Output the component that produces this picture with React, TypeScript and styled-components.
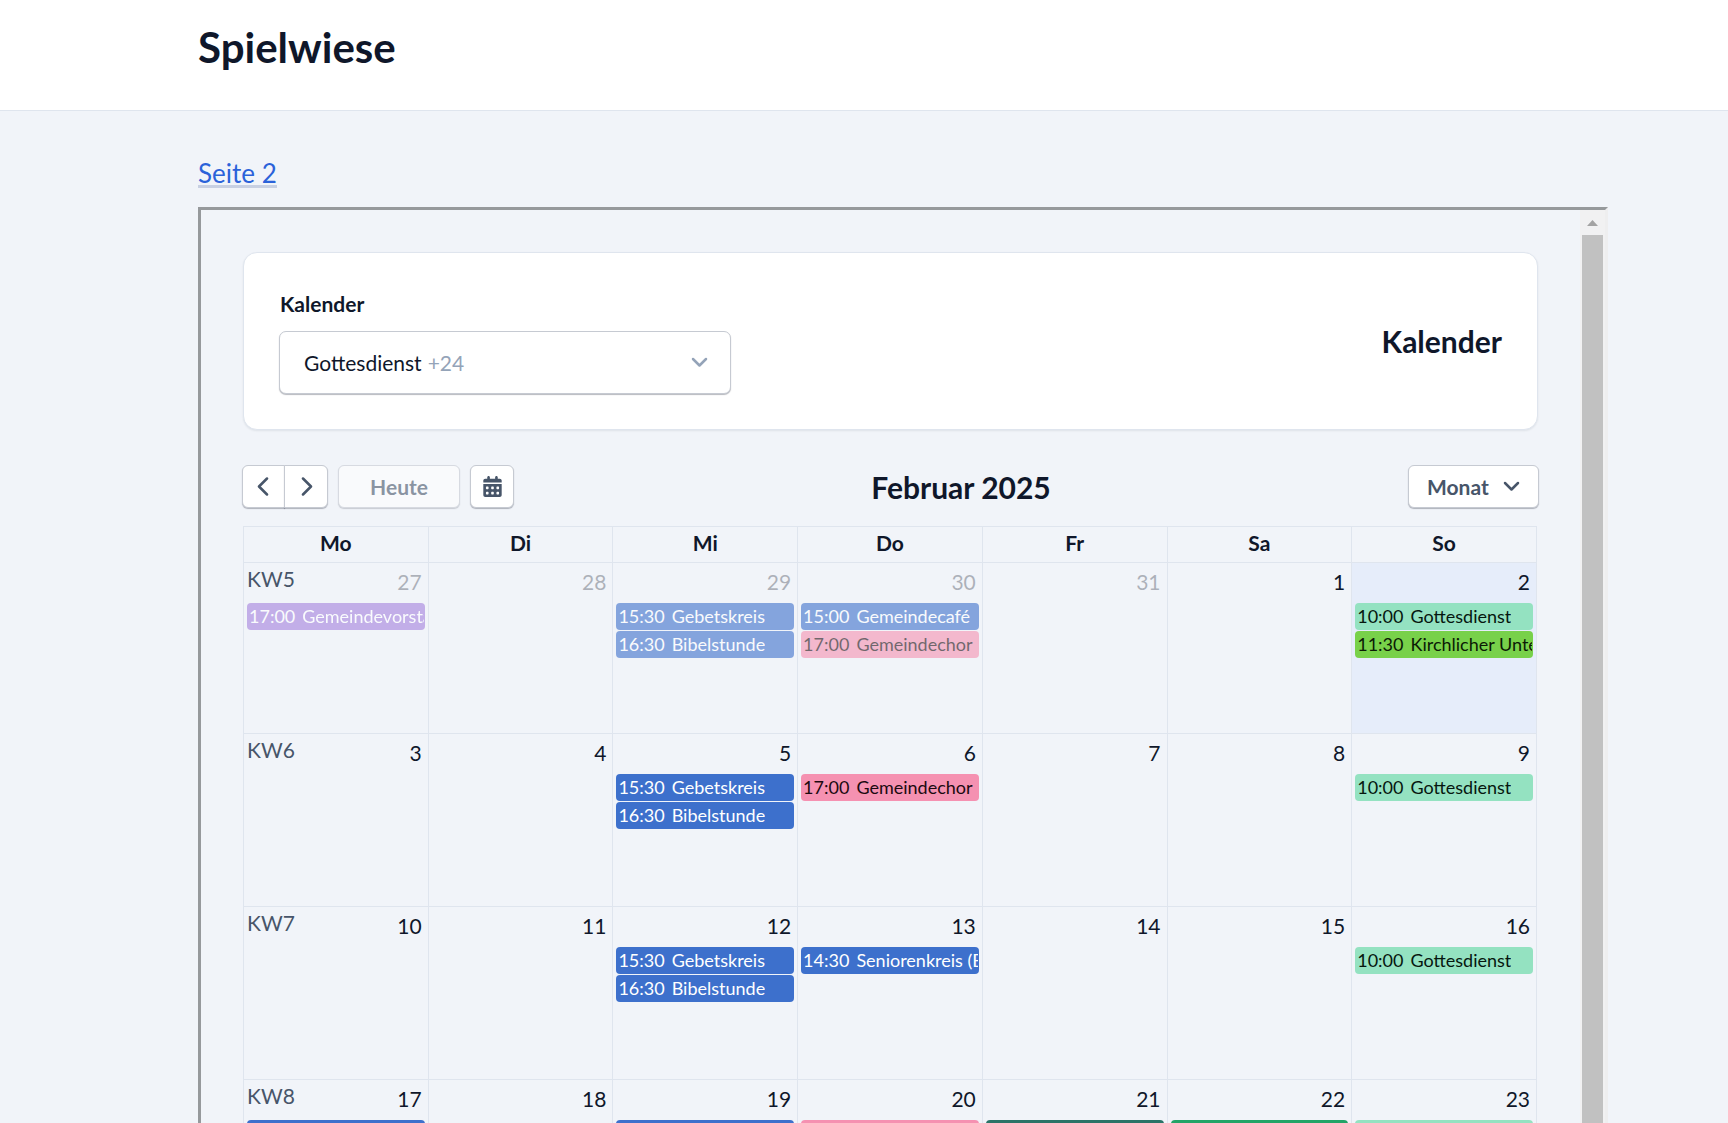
import React from "react";
import styled, { createGlobalStyle } from "styled-components";
import { FaCalendarDays } from "react-icons/fa6";

const color = {
  page: "#f1f4f9",
  text: "#0f172a",
  muted: "#475569",
  faint: "#94a3b8",
  line: "#dfe5ee",
  control: "#c6cad2",
};

const GlobalStyle = createGlobalStyle`
  *, *::before, *::after { box-sizing: border-box; }
  body {
    margin: 0;
    background: ${color.page};
    color: ${color.text};
    font-family: Lato, "Liberation Sans", sans-serif;
    font-size: 21px;
    line-height: 32px;
  }
  button, select { font: inherit; color: inherit; }
`;

const Page = styled.div`
  display: flex;
  flex-direction: column;
  height: 100vh;
  overflow: hidden;
`;

const Header = styled.header`
  flex: none;
  padding: 19px 120px 35px 198px;
  background: #fff;
  border-bottom: 1px solid ${color.line};
`;

const PageTitle = styled.h1`
  margin: 0;
  font-size: 42px;
  line-height: 56px;
  font-weight: 700;
`;

const Main = styled.main`
  display: flex;
  flex: 1;
  flex-direction: column;
  align-items: flex-start;
  min-height: 0;
  padding: 50px 120px 0 198px;
`;

const PageLink = styled.a`
  margin-bottom: 19px;
  border-bottom: 3px solid #c8d0e2;
  color: #2b62d9;
  font-size: 26px;
  line-height: 24px;
  text-decoration: none;
`;

const Frame = styled.section`
  display: flex;
  flex: 1;
  width: 100%;
  min-height: 0;
  border: 3px solid #96999c;
  border-right-color: #eeeeef;
  border-bottom: 0;
`;

const FrameContent = styled.div`
  flex: 1;
  min-width: 0;
  padding: 42px;
  overflow: hidden;
`;

const Scrollbar = styled.div`
  display: flex;
  flex: none;
  flex-direction: column;
  width: 25px;
  padding: 0 2px;
  background: #f1f1f2;
`;

const ScrollUp = styled.button`
  display: flex;
  align-items: center;
  justify-content: center;
  height: 25px;
  padding: 0;
  border: 0;
  background: none;
`;

const ScrollThumb = styled.div`
  flex: 1;
  background: #c1c1c1;
`;

const Card = styled.div`
  display: flex;
  align-items: center;
  justify-content: space-between;
  padding: 35px;
  border: 1px solid ${color.line};
  border-radius: 14px;
  background: #fff;
  box-shadow: 0 1px 2px rgba(15, 23, 42, 0.08);
`;

const Field = styled.div`
  display: flex;
  flex-direction: column;
  gap: 11px;
  width: 452px;
`;

const FieldLabel = styled.label`
  padding-left: 1px;
  font-weight: 700;
`;

const Picker = styled.button`
  display: flex;
  align-items: center;
  height: 63px;
  padding: 0 22px 0 24px;
  border: 1px solid ${color.control};
  border-radius: 7px;
  background: #fff;
  box-shadow: 0 1px 1px rgba(15, 23, 42, 0.3);
`;

const PickerCount = styled.span`
  flex: 1;
  padding-left: 6px;
  color: ${color.faint};
  text-align: left;
`;

const Heading = styled.h2`
  margin: 0;
  font-size: 30px;
  line-height: 40px;
  font-weight: 700;
`;

const Toolbar = styled.div`
  display: flex;
  align-items: center;
  justify-content: space-between;
  margin: 35px -1px 18px;
`;

const Controls = styled.div`
  display: flex;
  gap: 10px;
`;

const ButtonGroup = styled.div`
  display: flex;

  & > button:first-child {
    width: 43px;
    border-radius: 6px 0 0 6px;
  }
  & > button:last-child {
    margin-left: -1px;
    border-radius: 0 6px 6px 0;
  }
`;

const ToolButton = styled.button<{ $wide?: boolean }>`
  display: flex;
  align-items: center;
  justify-content: center;
  width: ${(p) => (p.$wide ? "122px" : "44px")};
  height: 43px;
  padding: 0;
  border: 1px solid ${color.control};
  border-radius: 6px;
  background: #fff;
  box-shadow: 0 1px 1px rgba(15, 23, 42, 0.3);
  color: ${color.muted};
  font-weight: 700;

  &:disabled {
    opacity: 0.6;
  }
`;

const ViewPicker = styled.div`
  display: grid;
  align-items: center;
  width: 131px;
  color: ${color.muted};

  & > * {
    grid-area: 1 / 1;
  }
  & > svg {
    justify-self: end;
    margin-right: 19px;
    pointer-events: none;
  }
`;

const ViewSelect = styled.select`
  width: 100%;
  height: 43px;
  padding: 0 18px;
  border: 1px solid ${color.control};
  border-radius: 6px;
  appearance: none;
  background: #fff;
  box-shadow: 0 1px 1px rgba(15, 23, 42, 0.3);
  font-weight: 700;
`;

const Calendar = styled.table`
  width: calc(100% - 1px);
  border-collapse: collapse;
  table-layout: fixed;
`;

const Weekday = styled.th`
  height: 36px;
  padding: 0 0 4px;
  border: 1px solid ${color.line};
  line-height: 28px;
  font-weight: 700;
`;

const Week = styled.tr`
  height: 173px;

  &:first-child {
    height: 171px;
  }
`;

const Day = styled.td<{ $today?: boolean }>`
  padding: 0 3px;
  border: 1px solid ${color.line};
  background: ${(p) => (p.$today ? "#e6edfa" : "transparent")};
  vertical-align: top;
`;

const DayHead = styled.div`
  display: flex;
  align-items: flex-start;
  justify-content: space-between;
  height: 40px;
`;

const WeekNumber = styled.span`
  color: ${color.muted};
`;

const DayNumber = styled.time<{ $past?: boolean }>`
  margin-left: auto;
  padding: 3px 3px 0 0;
  opacity: ${(p) => (p.$past ? 0.3 : 1)};
`;

const Events = styled.ul`
  display: flex;
  flex-direction: column;
  gap: 1px;
  margin: 0;
  padding: 0;
  list-style: none;
`;

const EventItem = styled.li<{ $fill: string; $ink: string; $past?: boolean }>`
  display: flex;
  gap: 7px;
  height: 27px;
  padding: 0 1px 0 2px;
  border-radius: 4px;
  background: ${(p) => p.$fill};
  color: ${(p) => p.$ink};
  font-size: 18px;
  line-height: 27px;
  white-space: nowrap;
  opacity: ${(p) => (p.$past ? 0.6 : 1)};
`;

const EventTitle = styled.span`
  min-width: 0;
  overflow: hidden;
`;

type Kind = "purple" | "blue" | "pink" | "mint" | "lime" | "teal" | "green";

const palette: Record<Kind, { fill: string; ink: string }> = {
  purple: { fill: "#a37fdc", ink: "#fff" },
  blue: { fill: "#3d70cc", ink: "#fff" },
  pink: { fill: "#f591b1", ink: "#1c0a10" },
  mint: { fill: "#94e2c1", ink: "#06170f" },
  lime: { fill: "#78d14a", ink: "#0b1a05" },
  teal: { fill: "#2a7468", ink: "#fff" },
  green: { fill: "#22a467", ink: "#fff" },
};

interface CalEvent {
  time: string;
  title: string;
  kind: Kind;
}

interface DayData {
  day: number;
  past?: boolean;
  today?: boolean;
  events?: CalEvent[];
}

const ev = (time: string, title: string, kind: Kind): CalEvent => ({ time, title, kind });

const gebetskreis = ev("15:30", "Gebetskreis", "blue");
const bibelstunde = ev("16:30", "Bibelstunde", "blue");
const chor = ev("17:00", "Gemeindechor", "pink");
const gottesdienst = ev("10:00", "Gottesdienst", "mint");

const weekdays = ["Mo", "Di", "Mi", "Do", "Fr", "Sa", "So"];

const weeks: { number: number; days: DayData[] }[] = [
  {
    number: 5,
    days: [
      { day: 27, past: true, events: [ev("17:00", "Gemeindevorstand", "purple")] },
      { day: 28, past: true },
      { day: 29, past: true, events: [gebetskreis, bibelstunde] },
      { day: 30, past: true, events: [ev("15:00", "Gemeindecafé", "blue"), chor] },
      { day: 31, past: true },
      { day: 1 },
      { day: 2, today: true, events: [gottesdienst, ev("11:30", "Kirchlicher Unterricht", "lime")] },
    ],
  },
  {
    number: 6,
    days: [
      { day: 3 },
      { day: 4 },
      { day: 5, events: [gebetskreis, bibelstunde] },
      { day: 6, events: [chor] },
      { day: 7 },
      { day: 8 },
      { day: 9, events: [gottesdienst] },
    ],
  },
  {
    number: 7,
    days: [
      { day: 10 },
      { day: 11 },
      { day: 12, events: [gebetskreis, bibelstunde] },
      { day: 13, events: [ev("14:30", "Seniorenkreis (Begegnung)", "blue")] },
      { day: 14 },
      { day: 15 },
      { day: 16, events: [gottesdienst] },
    ],
  },
  {
    number: 8,
    days: [
      { day: 17, events: [ev("19:00", "Hauskreis", "blue")] },
      { day: 18 },
      { day: 19, events: [gebetskreis, bibelstunde] },
      { day: 20, events: [chor] },
      { day: 21, events: [ev("18:00", "Jugendkreis", "teal")] },
      { day: 22, events: [ev("09:30", "Frühstück", "green")] },
      { day: 23, events: [gottesdienst] },
    ],
  },
];

const chevronPaths = {
  down: { d: "M2 2l6.5 6.5L15 2", w: 17, h: 11 },
  left: { d: "M10 1.5L2 9.5l8 8", w: 13, h: 19 },
  right: { d: "M3 1.5l8 8-8 8", w: 13, h: 19 },
};

function Chevron({ to, tint = "currentColor" }: { to: keyof typeof chevronPaths; tint?: string }) {
  const { d, w, h } = chevronPaths[to];
  return (
    <svg width={w} height={h} viewBox={`0 0 ${w} ${h}`} fill="none" stroke={tint} strokeWidth={2.5} strokeLinecap="round" strokeLinejoin="round" aria-hidden="true">
      <path d={d} />
    </svg>
  );
}

export default function App() {
  return (
    <Page>
      <GlobalStyle />
      <Header>
        <PageTitle>Spielwiese</PageTitle>
      </Header>
      <Main>
        <PageLink href="#seite-2">Seite 2</PageLink>
        <Frame>
          <FrameContent>
            <Card>
              <Field>
                <FieldLabel htmlFor="calendars">Kalender</FieldLabel>
                <Picker id="calendars" type="button" aria-haspopup="listbox">
                  Gottesdienst<PickerCount>+24</PickerCount>
                  <Chevron to="down" tint={color.faint} />
                </Picker>
              </Field>
              <Heading>Kalender</Heading>
            </Card>
            <Toolbar>
              <Controls>
                <ButtonGroup>
                  <ToolButton type="button" aria-label="Zurück">
                    <Chevron to="left" />
                  </ToolButton>
                  <ToolButton type="button" aria-label="Weiter">
                    <Chevron to="right" />
                  </ToolButton>
                </ButtonGroup>
                <ToolButton type="button" $wide disabled>
                  Heute
                </ToolButton>
                <ToolButton type="button" aria-label="Datum wählen">
                  <FaCalendarDays size={21} />
                </ToolButton>
              </Controls>
              <Heading>Februar 2025</Heading>
              <ViewPicker>
                <ViewSelect aria-label="Ansicht" defaultValue="Monat">
                  <option>Monat</option>
                  <option>Woche</option>
                  <option>Tag</option>
                </ViewSelect>
                <Chevron to="down" />
              </ViewPicker>
            </Toolbar>
            <Calendar>
              <thead>
                <tr>
                  {weekdays.map((name) => (
                    <Weekday key={name} scope="col">
                      {name}
                    </Weekday>
                  ))}
                </tr>
              </thead>
              <tbody>
                {weeks.map((week) => (
                  <Week key={week.number}>
                    {week.days.map((d, i) => (
                      <Day key={d.day} $today={d.today}>
                        <DayHead>
                          {i === 0 && <WeekNumber>KW{week.number}</WeekNumber>}
                          <DayNumber $past={d.past}>{d.day}</DayNumber>
                        </DayHead>
                        {d.events && (
                          <Events>
                            {d.events.map((e) => (
                              <EventItem key={e.time} $fill={palette[e.kind].fill} $ink={palette[e.kind].ink} $past={d.past}>
                                <span>{e.time}</span>
                                <EventTitle>{e.title}</EventTitle>
                              </EventItem>
                            ))}
                          </Events>
                        )}
                      </Day>
                    ))}
                  </Week>
                ))}
              </tbody>
            </Calendar>
          </FrameContent>
          <Scrollbar>
            <ScrollUp type="button" aria-label="Nach oben scrollen">
              <svg width="11" height="6" viewBox="0 0 11 6" aria-hidden="true">
                <path d="M0 6L5.5 0 11 6z" fill="#a3a3a3" />
              </svg>
            </ScrollUp>
            <ScrollThumb />
          </Scrollbar>
        </Frame>
      </Main>
    </Page>
  );
}
